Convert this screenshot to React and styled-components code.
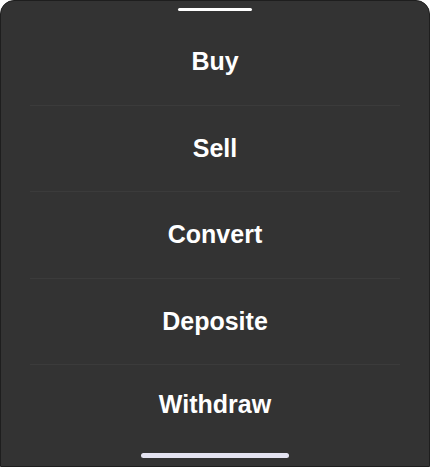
import React from "react";
import styled, { createGlobalStyle } from "styled-components";

const Global = createGlobalStyle`
  html, body { margin: 0; padding: 0; background: #ffffff; }
  body { font-family: "Liberation Sans", Arial, sans-serif; }
`;

const Sheet = styled.div`
  box-sizing: border-box;
  width: 430px;
  height: 467px;
  background: #333333;
  border: 1px solid #1e1e1e;
  border-radius: 14px 14px 0 0;
  display: flex;
  flex-direction: column;
  align-items: center;
  overflow: hidden;
`;

const Grabber = styled.div`
  width: 74px;
  height: 3px;
  margin-top: 7px;
  border-radius: 2px;
  background: #ffffff;
`;

const List = styled.ul`
  list-style: none;
  margin: 8px 0 0;
  padding: 0 29px;
  width: 100%;
  box-sizing: border-box;
`;

const Item = styled.li`
  height: ${(p) => (p.$last ? "78px" : "85.5px")};
  display: flex;
  align-items: center;
  justify-content: center;
  border-bottom: 1px solid ${(p) => (p.$last ? "transparent" : "#3b3b3b")};
  color: #ffffff;
  font-size: 25px;
  font-weight: 700;
`;

const HomeIndicator = styled.div`
  margin-top: auto;
  margin-bottom: 8px;
  width: 148px;
  height: 5px;
  border-radius: 3px;
  background: #e4e3f1;
`;

const actions = ["Buy", "Sell", "Convert", "Deposite", "Withdraw"];

export default function App() {
  return (
    <>
      <Global />
      <Sheet>
        <Grabber />
        <List>
          {actions.map((a, i) => (
            <Item key={a} $last={i === actions.length - 1}>
              {a}
            </Item>
          ))}
        </List>
        <HomeIndicator />
      </Sheet>
    </>
  );
}
